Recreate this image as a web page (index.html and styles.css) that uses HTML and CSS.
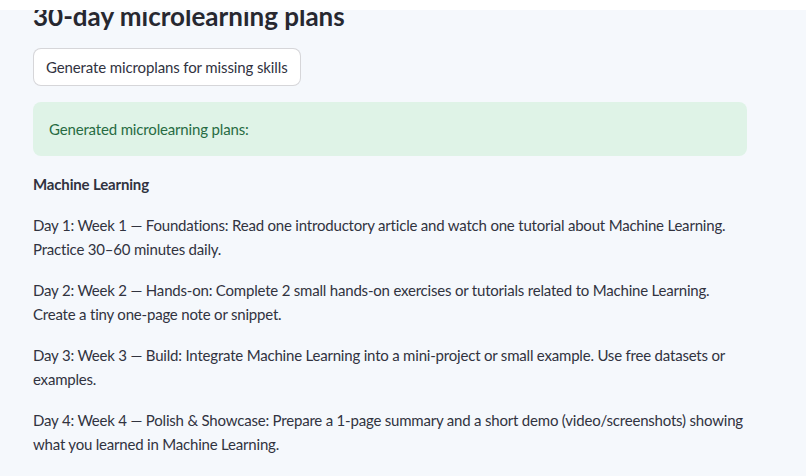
FILE: index.html
```html
<!DOCTYPE html>
<html lang="en">
<head>
<meta charset="utf-8">
<title>30-day microlearning plans</title>
<link rel="stylesheet" href="styles.css">
</head>
<body>
<header class="topbar"></header>
<main class="main">
  <h3 class="title">30-day microlearning plans</h3>
  <div class="row"><button class="btn" type="button">Generate microplans for missing skills</button></div>
  <div class="alert">Generated microlearning plans:</div>
  <p class="skill">Machine Learning</p>
  <p class="day">Day 1: Week 1 — Foundations: Read one introductory article and watch one tutorial about Machine Learning. Practice 30–60 minutes daily.</p>
  <p class="day">Day 2: Week 2 — Hands-on: Complete 2 small hands-on exercises or tutorials related to Machine Learning. Create a tiny one-page note or snippet.</p>
  <p class="day">Day 3: Week 3 — Build: Integrate Machine Learning into a mini-project or small example. Use free datasets or examples.</p>
  <p class="day">Day 4: Week 4 — Polish &amp; Showcase: Prepare a 1-page summary and a short demo (video/screenshots) showing what you learned in Machine Learning.</p>
</main>
</body>
</html>
```

FILE: styles.css
```css
html, body {
  margin: 0;
  padding: 0;
  background: #f5f8fc;
  font-family: "Lato", "Noto Sans", sans-serif;
  color: #31333f;
  overflow: hidden;
  height: 100%;
}

.topbar {
  position: fixed;
  top: 0;
  left: 0;
  right: 0;
  height: 10px;
  background: #ffffff;
  z-index: 10;
}

.main {
  width: 714px;
  padding: 1px 0 0 33px;
  display: flex;
  flex-direction: column;
  gap: 16px;
  letter-spacing: -0.16px;
}

.title {
  margin: 0;
  font-size: 26px;
  line-height: 31px;
  font-weight: 700;
  color: #262730;
  letter-spacing: 0;
}

.row {
  display: flex;
}

.btn {
  height: 38px;
  padding: 0 12px;
  background: #ffffff;
  border: 1px solid rgba(49, 51, 63, 0.2);
  border-radius: 8px;
  font-family: inherit;
  font-size: 15px;
  letter-spacing: -0.12px;
  color: #31333f;
}

.alert {
  background: #dff3e7;
  color: #276b43;
  border-radius: 8px;
  padding: 15px 16px;
  font-size: 15px;
  line-height: 24px;
}

.skill, .day {
  margin: 0;
  font-size: 15px;
  line-height: 24.5px;
}

.day {
  letter-spacing: -0.2px;
}

.skill {
  font-weight: 700;
}
```
